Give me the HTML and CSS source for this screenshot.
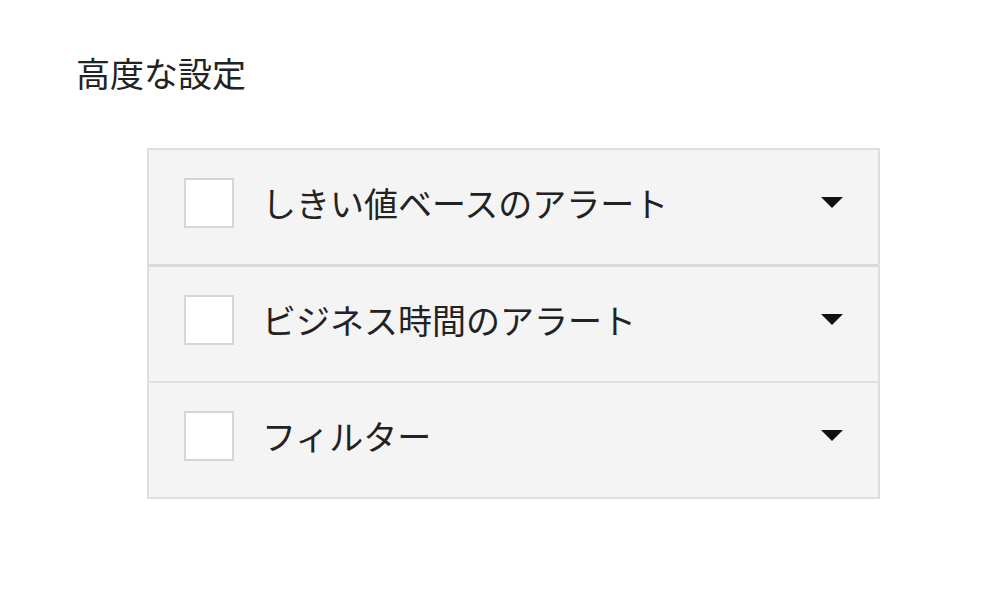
FILE: index.html
```html
<!DOCTYPE html>
<html lang="ja">
<head>
    <meta charset="UTF-8">
    <meta name="viewport" content="width=device-width, initial-scale=1.0">
    <title>高度な設定</title>
    <link rel="stylesheet" href="styles.css">
</head>
<body>
    <div class="settings">
        <h2 class="settings-title">高度な設定</h2>
        <div class="accordion">
            <div class="acc-row first">
                <span class="check"></span>
                <span class="acc-label">しきい値ベースのアラート</span>
                <span class="caret"></span>
            </div>
            <div class="acc-row">
                <span class="check"></span>
                <span class="acc-label">ビジネス時間のアラート</span>
                <span class="caret"></span>
            </div>
            <div class="acc-row last">
                <span class="check"></span>
                <span class="acc-label">フィルター</span>
                <span class="caret"></span>
            </div>
        </div>
    </div>
</body>
</html>
```

FILE: styles.css
```css
body{
    margin: 0;
    background: #fff;
    font-family: "Noto Sans CJK JP", "Noto Sans", sans-serif;
    color: #222;
}
.settings{
    padding: 49px 0 0 76px;
}
.settings-title{
    margin: 0;
    font-size: 34px;
    font-weight: normal;
    line-height: 48px;
}
.accordion{
    margin: 51px 0 0 71px;
    width: 729px;
    border: 2px solid #dedede;
    background: #f4f4f4;
}
.acc-row{
    height: 105px;
    padding: 0 35px 9px;
    display: flex;
    align-items: center;
    border-bottom: 2px solid #e0e0e0;
}
.acc-row.first{
    border-bottom: 3px solid #d6dada;
}
.acc-row.last{
    border-bottom: none;
}
.check{
    width: 46px;
    height: 46px;
    border: 2px solid #d6d6d6;
    background: #fff;
    flex: none;
}
.acc-label{
    flex: 1;
    margin-left: 28px;
    font-size: 34px;
    line-height: 40px;
}
.caret{
    width: 0;
    height: 0;
    border-left: 11px solid transparent;
    border-right: 11px solid transparent;
    border-top: 11px solid #111;
}
```
